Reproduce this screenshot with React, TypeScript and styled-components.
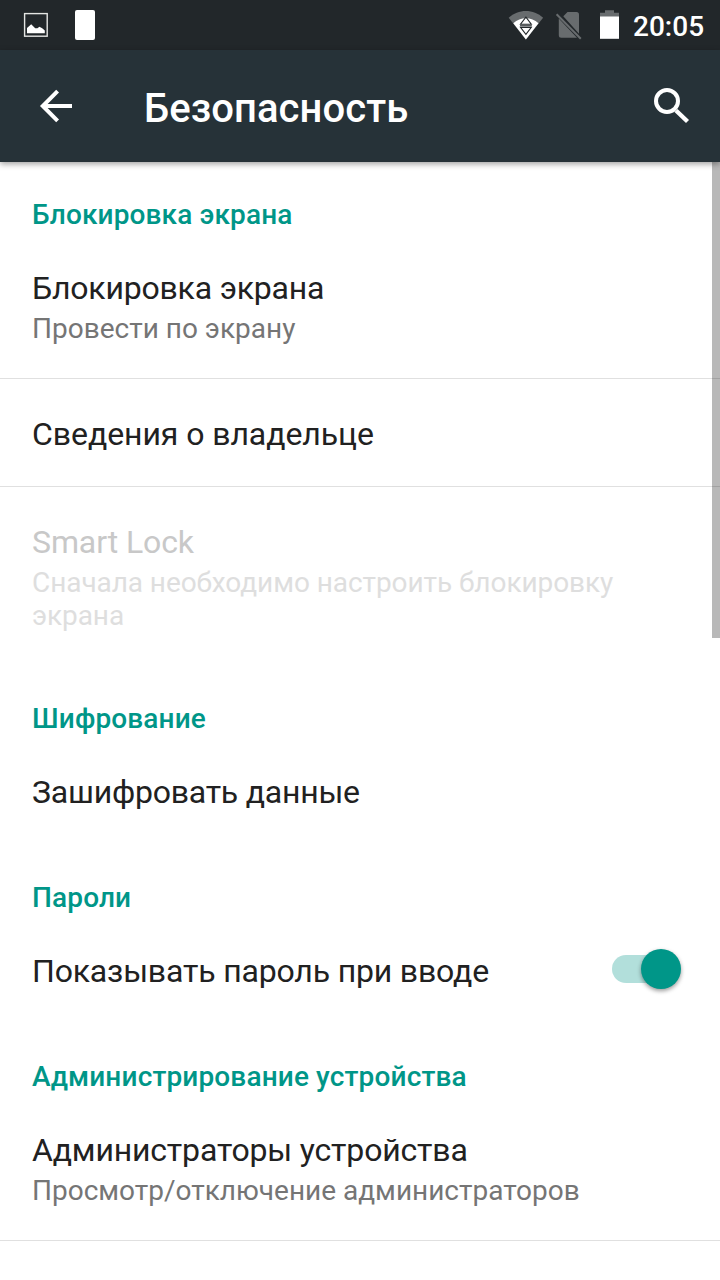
import React from "react";
import styled, { createGlobalStyle } from "styled-components";

const GlobalStyle = createGlobalStyle`
  *, *::before, *::after { box-sizing: border-box; }
  html, body { margin: 0; padding: 0; background: #fff; overflow: hidden; }
  body { font-family: Roboto, "Noto Sans", sans-serif; }
`;

const Screen = styled.div`
  width: 720px;
  height: 1280px;
  display: flex;
  flex-direction: column;
  background: #fff;
  overflow: hidden;
`;

const StatusBar = styled.header`
  flex: none;
  height: 50px;
  display: flex;
  justify-content: space-between;
  background: #22272a;
  color: #fff;
`;

const StatusGroup = styled.div`
  display: flex;
  align-items: center;

  svg { display: block; }
`;

const Clock = styled.time`
  width: 90px;
  padding-left: 3px;
  padding-top: 3px;
  font-size: 28px;
  line-height: 33px;
  font-weight: 500;
`;

const Toolbar = styled.div`
  flex: none;
  position: relative;
  z-index: 1;
  height: 112px;
  display: flex;
  align-items: center;
  background: #263238;
  color: #fff;
  box-shadow: 0 2px 6px rgba(0, 0, 0, 0.38);
`;

const IconButton = styled.button<{ $width: number }>`
  width: ${({ $width }) => $width}px;
  height: 112px;
  padding: 0;
  border: 0;
  background: none;
  color: inherit;

  svg { display: block; }
`;

const ScreenTitle = styled.h1`
  flex: 1;
  margin: 0;
  padding-top: 6px;
  font-size: 40px;
  line-height: 48px;
  font-weight: 500;
  letter-spacing: 0.08px;
`;

const Content = styled.main`
  position: relative;
  flex: 1;
  min-height: 0;
`;

const ScrollThumb = styled.div`
  position: absolute;
  top: 0;
  right: 0;
  width: 8px;
  height: 476px;
  background: rgba(0, 0, 0, 0.28);
`;

const Section = styled.section``;

const SectionTitle = styled.h2`
  margin: 0;
  padding: 36px 32px 2px;
  font-size: 28px;
  line-height: 33px;
  font-weight: 500;
  letter-spacing: 0.14px;
  color: #009688;
`;

const Row = styled.div<{ $last?: boolean; $disabled?: boolean }>`
  display: flex;
  align-items: center;
  justify-content: space-between;
  padding: 36px 32px 33px;
  border-bottom: 1px solid ${({ $last }) => ($last ? "transparent" : "#e0e0e0")};
  color: ${({ $disabled }) => ($disabled ? "#c8c8c8" : "#212121")};
`;

const RowTitle = styled.div<{ $tracking?: number }>`
  font-size: 32px;
  line-height: 38px;
  letter-spacing: ${({ $tracking = -0.17 }) => $tracking}px;
`;

const RowSummary = styled.div<{ $disabled?: boolean }>`
  margin-top: 5px;
  font-size: 28px;
  line-height: 33px;
  letter-spacing: ${({ $disabled }) => ($disabled ? "-0.07px" : "0")};
  color: ${({ $disabled }) => ($disabled ? "#dedede" : "#757575")};
`;

const SwitchTrack = styled.div`
  flex: none;
  display: flex;
  align-items: center;
  justify-content: flex-end;
  width: 69px;
  height: 28px;
  margin: 0 7px 4px 0;
  border-radius: 14px;
  background: linear-gradient(to right, #b2dfdb 56px, transparent 56px);
`;

const SwitchThumb = styled.div`
  width: 40px;
  height: 40px;
  flex: none;
  border-radius: 50%;
  background: #009688;
  box-shadow: 0 2px 4px rgba(0, 0, 0, 0.4);
`;

const NotificationIcons = () => (
  <svg width="110" height="50" viewBox="0 0 110 50">
    <rect x="24.6" y="13.6" width="22.6" height="22.6" fill="none" stroke="#e4e5e3" strokeWidth="1.4" />
    <path d="M27 33.3V28l1.7-1.5 2.5-2.2 4 4h2.2l2-1.5 2.8 1.5 2.6 2.2v2.8z" fill="#fff" />
    <rect x="75" y="10" width="20" height="30" rx="2" fill="#fff" />
  </svg>
);

const SystemIcons = () => (
  <svg width="125" height="50" viewBox="505 0 125 50">
    <path d="M525.9 39.6L508.7 17.8C513.5 13.2 519.6 11 525.9 11s12.4 2.2 17.2 6.8z" fill="#686c6e" />
    <path d="M525.9 39.6L513.3 23.2C517 19.8 521.4 18.3 525.9 18.3s8.9 1.5 12.6 4.9z" fill="#fff" />
    <g fill="#fff" stroke="#22272a" strokeWidth="1.1">
      <path d="M525.9 17.2l5.4 7h-10.8zM525.9 34.4l5.4-7h-10.8z" />
      <path d="M520 25.8h11.8" />
    </g>
    <path d="M567.5 12h9q2.5 0 2.5 2.5V33.8L563.3 16.2zM558.8 18.6L577 37.8H561.3q-2.5 0-2.5-2.5z" fill="#686c6e" />
    <path d="M556.6 14.3L580.8 38.8" stroke="#686c6e" strokeWidth="2" />
    <path d="M605 10.3h9V12.8h5V17h-19V12.8h5z" fill="#686c6e" />
    <rect x="600" y="16.5" width="19" height="22.3" fill="#fff" />
  </svg>
);

const BackIcon = () => (
  <svg width="144" height="112" viewBox="0 0 144 112" fill="none" stroke="#fff" strokeWidth="4">
    <path d="M72 56H43M57.6 41.2L42.8 56l14.8 14.8" />
  </svg>
);

const SearchIcon = () => (
  <svg width="80" height="112" viewBox="0 0 80 112" fill="none" stroke="#fff">
    <circle cx="27" cy="51" r="11" strokeWidth="4" />
    <path d="M36 60.5L47.5 71.5" strokeWidth="4.4" />
  </svg>
);

type Item = {
  title: string;
  summary?: string;
  tracking?: number;
  disabled?: boolean;
  on?: boolean;
  divided?: boolean;
};

const sections: { title: string; items: Item[] }[] = [
  {
    title: "Блокировка экрана",
    items: [
      { title: "Блокировка экрана", summary: "Провести по экрану", tracking: -0.2 },
      { title: "Сведения о владельце", tracking: -0.07 },
      {
        title: "Smart Lock",
        summary: "Сначала необходимо настроить блокировку экрана",
        tracking: -0.1,
        disabled: true,
      },
    ],
  },
  { title: "Шифрование", items: [{ title: "Зашифровать данные", tracking: -0.22 }] },
  { title: "Пароли", items: [{ title: "Показывать пароль при вводе", on: true }] },
  {
    title: "Администрирование устройства",
    items: [
      {
        title: "Администраторы устройства",
        summary: "Просмотр/отключение администраторов",
        divided: true,
      },
    ],
  },
];

export default function App() {
  return (
    <>
      <GlobalStyle />
      <Screen>
        <StatusBar>
          <StatusGroup>
            <NotificationIcons />
          </StatusGroup>
          <StatusGroup>
            <SystemIcons />
            <Clock>20:05</Clock>
          </StatusGroup>
        </StatusBar>
        <Toolbar>
          <IconButton $width={144} aria-label="Назад">
            <BackIcon />
          </IconButton>
          <ScreenTitle>Безопасность</ScreenTitle>
          <IconButton $width={80} aria-label="Поиск">
            <SearchIcon />
          </IconButton>
        </Toolbar>
        <Content>
          {sections.map((section) => (
            <Section key={section.title}>
              <SectionTitle>{section.title}</SectionTitle>
              {section.items.map((item, i) => (
                <Row
                  key={item.title}
                  $disabled={item.disabled}
                  $last={!item.divided && i === section.items.length - 1}
                >
                  <div>
                    <RowTitle $tracking={item.tracking}>{item.title}</RowTitle>
                    {item.summary && (
                      <RowSummary $disabled={item.disabled}>{item.summary}</RowSummary>
                    )}
                  </div>
                  {item.on && (
                    <SwitchTrack role="switch" aria-checked="true">
                      <SwitchThumb />
                    </SwitchTrack>
                  )}
                </Row>
              ))}
            </Section>
          ))}
          <ScrollThumb />
        </Content>
      </Screen>
    </>
  );
}
